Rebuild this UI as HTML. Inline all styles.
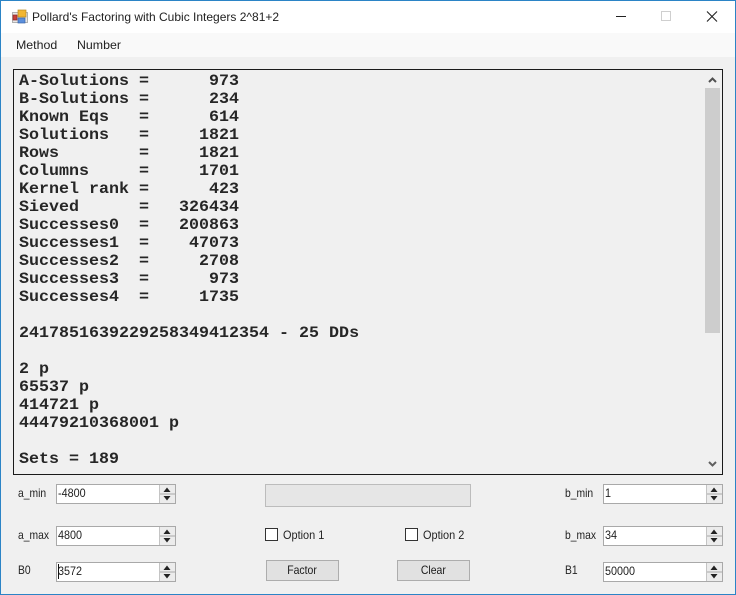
<!DOCTYPE html>
<html><head><meta charset="utf-8">
<style>
html,body{margin:0;padding:0}
body{width:736px;height:595px;position:relative;overflow:hidden;background:#f0f0f0;font-family:"Liberation Sans",sans-serif;font-size:12px;color:#1a1a1a}
.a{position:absolute}
.lbl{position:absolute;font-size:12px;line-height:14px;white-space:nowrap;transform-origin:left top;transform:scaleX(.86);color:#222}
.spin{position:absolute;width:118px;height:18px;background:#fff;border:1px solid #a9a9a9}
.spin span{position:absolute;left:1px;top:1px;line-height:14px;font-size:12px;transform-origin:left top;transform:scaleX(.9);color:#222}
.spin svg{position:absolute;right:0;top:0}
.btn{position:absolute;width:71px;height:19px;background:#e1e1e1;border:1px solid #adadad;text-align:center;line-height:19px;font-size:12px}
.btn b{font-weight:normal;display:inline-block;transform:scaleX(.87)}
.cb{position:absolute;width:11px;height:11px;background:#fff;border:1px solid #333}
pre{position:absolute;left:19px;top:72px;margin:0;font:bold 15.5px/18px "Liberation Mono",monospace;color:#262626;white-space:pre;transform-origin:left top;transform:scaleX(1.0753)}
</style></head><body>
<div class="a" style="left:0;top:0;width:736px;height:33px;background:#fff"></div>
<div class="a" style="left:0;top:33px;width:736px;height:24px;background:#f9f9f9"></div>
<div class="a" style="left:0;top:0;width:736px;height:1px;background:#2b84c6"></div>
<div class="a" style="left:0;top:0;width:1px;height:595px;background:#2b84c6"></div>
<div class="a" style="right:0;top:0;width:1px;height:595px;background:#2b84c6"></div>
<div class="a" style="left:0;top:594px;width:736px;height:1px;background:#2b84c6"></div>

<svg class="a" style="left:12px;top:9px" width="16" height="16" viewBox="0 0 16 16">
<rect x="0.5" y="3.5" width="15" height="10" fill="#e8e8e8" stroke="#b0b0b0"/>
<rect x="1" y="6" width="4" height="5" fill="#c8413a" stroke="#8a2a2a" stroke-width=".7"/>
<rect x="6" y="1" width="8" height="7" fill="#f2b632" stroke="#b98a20" stroke-width=".7"/>
<rect x="6" y="9" width="7" height="5" fill="#5b8fdc" stroke="#3a66a8" stroke-width=".7"/>
</svg>
<div class="lbl" style="left:32px;top:10px;transform:none">Pollard's Factoring with Cubic Integers 2^81+2</div>
<svg class="a" style="left:610px;top:8px" width="120" height="18" viewBox="0 0 120 18">
<path d="M6 8.5H16" stroke="#222" stroke-width="1"/>
<rect x="51.5" y="3.5" width="9" height="9" fill="none" stroke="#cfcfcf"/>
<path d="M97 3.5L107 13.5M107 3.5L97 13.5" stroke="#222" stroke-width="1.1" fill="none"/>
</svg>
<div class="lbl" style="left:16px;top:38px;transform:scaleX(1.03)">Method</div>
<div class="lbl" style="left:77px;top:38px;transform:scaleX(1.03)">Number</div>

<div class="a" style="left:13px;top:69px;width:708px;height:404px;border:1px solid #1a1a1a;background:#f0f0f0"></div>
<pre>A-Solutions =      973
B-Solutions =      234
Known Eqs   =      614
Solutions   =     1821
Rows        =     1821
Columns     =     1701
Kernel rank =      423
Sieved      =   326434
Successes0  =   200863
Successes1  =    47073
Successes2  =     2708
Successes3  =      973
Successes4  =     1735

2417851639229258349412354 - 25 DDs

2 p
65537 p
414721 p
44479210368001 p

Sets = 189</pre>
<div class="a" style="left:705px;top:70px;width:15px;height:404px;background:#f0f0f0"></div>
<div class="a" style="left:705px;top:88px;width:15px;height:245px;background:#cdcdcd"></div>
<svg class="a" style="left:705px;top:70px" width="15" height="404" viewBox="0 0 15 404">
<path d="M4 12L7.5 8.5L11 12" stroke="#505050" stroke-width="2" fill="none"/>
<path d="M4 392L7.5 395.5L11 392" stroke="#606060" stroke-width="2" fill="none"/>
</svg>

<div class="lbl" style="left:18px;top:486px">a_min</div>
<div class="lbl" style="left:18px;top:528px">a_max</div>
<div class="lbl" style="left:18px;top:563px">B0</div>
<div class="lbl" style="left:565px;top:486px">b_min</div>
<div class="lbl" style="left:565px;top:528px">b_max</div>
<div class="lbl" style="left:565px;top:563px">B1</div>

<div class="spin" style="left:56px;top:484px"><span>-4800</span><svg width="16" height="18" viewBox="0 0 16 18"><path d="M.5 0V18" stroke="#c4c4c4"/><rect x="1" y="0" width="15" height="18" fill="#ececec"/><path d="M1 9H16" stroke="#a9a9a9"/><path d="M4.5 7H11.5L8 2.5Z M4.5 11H11.5L8 15.5Z" fill="#222"/></svg></div>
<div class="spin" style="left:56px;top:526px"><span>4800</span><svg width="16" height="18" viewBox="0 0 16 18"><path d="M.5 0V18" stroke="#c4c4c4"/><rect x="1" y="0" width="15" height="18" fill="#ececec"/><path d="M1 9H16" stroke="#a9a9a9"/><path d="M4.5 7H11.5L8 2.5Z M4.5 11H11.5L8 15.5Z" fill="#222"/></svg></div>
<div class="spin" style="left:56px;top:562px"><span>3572</span><svg width="16" height="18" viewBox="0 0 16 18"><path d="M.5 0V18" stroke="#c4c4c4"/><rect x="1" y="0" width="15" height="18" fill="#ececec"/><path d="M1 9H16" stroke="#a9a9a9"/><path d="M4.5 7H11.5L8 2.5Z M4.5 11H11.5L8 15.5Z" fill="#222"/></svg></div>
<div class="a" style="left:58px;top:564px;width:1px;height:15px;background:#111"></div>
<div class="spin" style="left:603px;top:484px"><span>1</span><svg width="16" height="18" viewBox="0 0 16 18"><path d="M.5 0V18" stroke="#c4c4c4"/><rect x="1" y="0" width="15" height="18" fill="#ececec"/><path d="M1 9H16" stroke="#a9a9a9"/><path d="M4.5 7H11.5L8 2.5Z M4.5 11H11.5L8 15.5Z" fill="#222"/></svg></div>
<div class="spin" style="left:603px;top:526px"><span>34</span><svg width="16" height="18" viewBox="0 0 16 18"><path d="M.5 0V18" stroke="#c4c4c4"/><rect x="1" y="0" width="15" height="18" fill="#ececec"/><path d="M1 9H16" stroke="#a9a9a9"/><path d="M4.5 7H11.5L8 2.5Z M4.5 11H11.5L8 15.5Z" fill="#222"/></svg></div>
<div class="spin" style="left:603px;top:562px"><span>50000</span><svg width="16" height="18" viewBox="0 0 16 18"><path d="M.5 0V18" stroke="#c4c4c4"/><rect x="1" y="0" width="15" height="18" fill="#ececec"/><path d="M1 9H16" stroke="#a9a9a9"/><path d="M4.5 7H11.5L8 2.5Z M4.5 11H11.5L8 15.5Z" fill="#222"/></svg></div>

<div class="a" style="left:265px;top:484px;width:204px;height:21px;background:#e6e6e6;border:1px solid #bcbcbc"></div>
<div class="cb" style="left:265px;top:528px"></div>
<div class="lbl" style="left:283px;top:528px;transform:scaleX(.91)">Option 1</div>
<div class="cb" style="left:405px;top:528px"></div>
<div class="lbl" style="left:423px;top:528px;transform:scaleX(.91)">Option 2</div>
<div class="btn" style="left:266px;top:560px"><b>Factor</b></div>
<div class="btn" style="left:397px;top:560px"><b>Clear</b></div>
</body></html>
